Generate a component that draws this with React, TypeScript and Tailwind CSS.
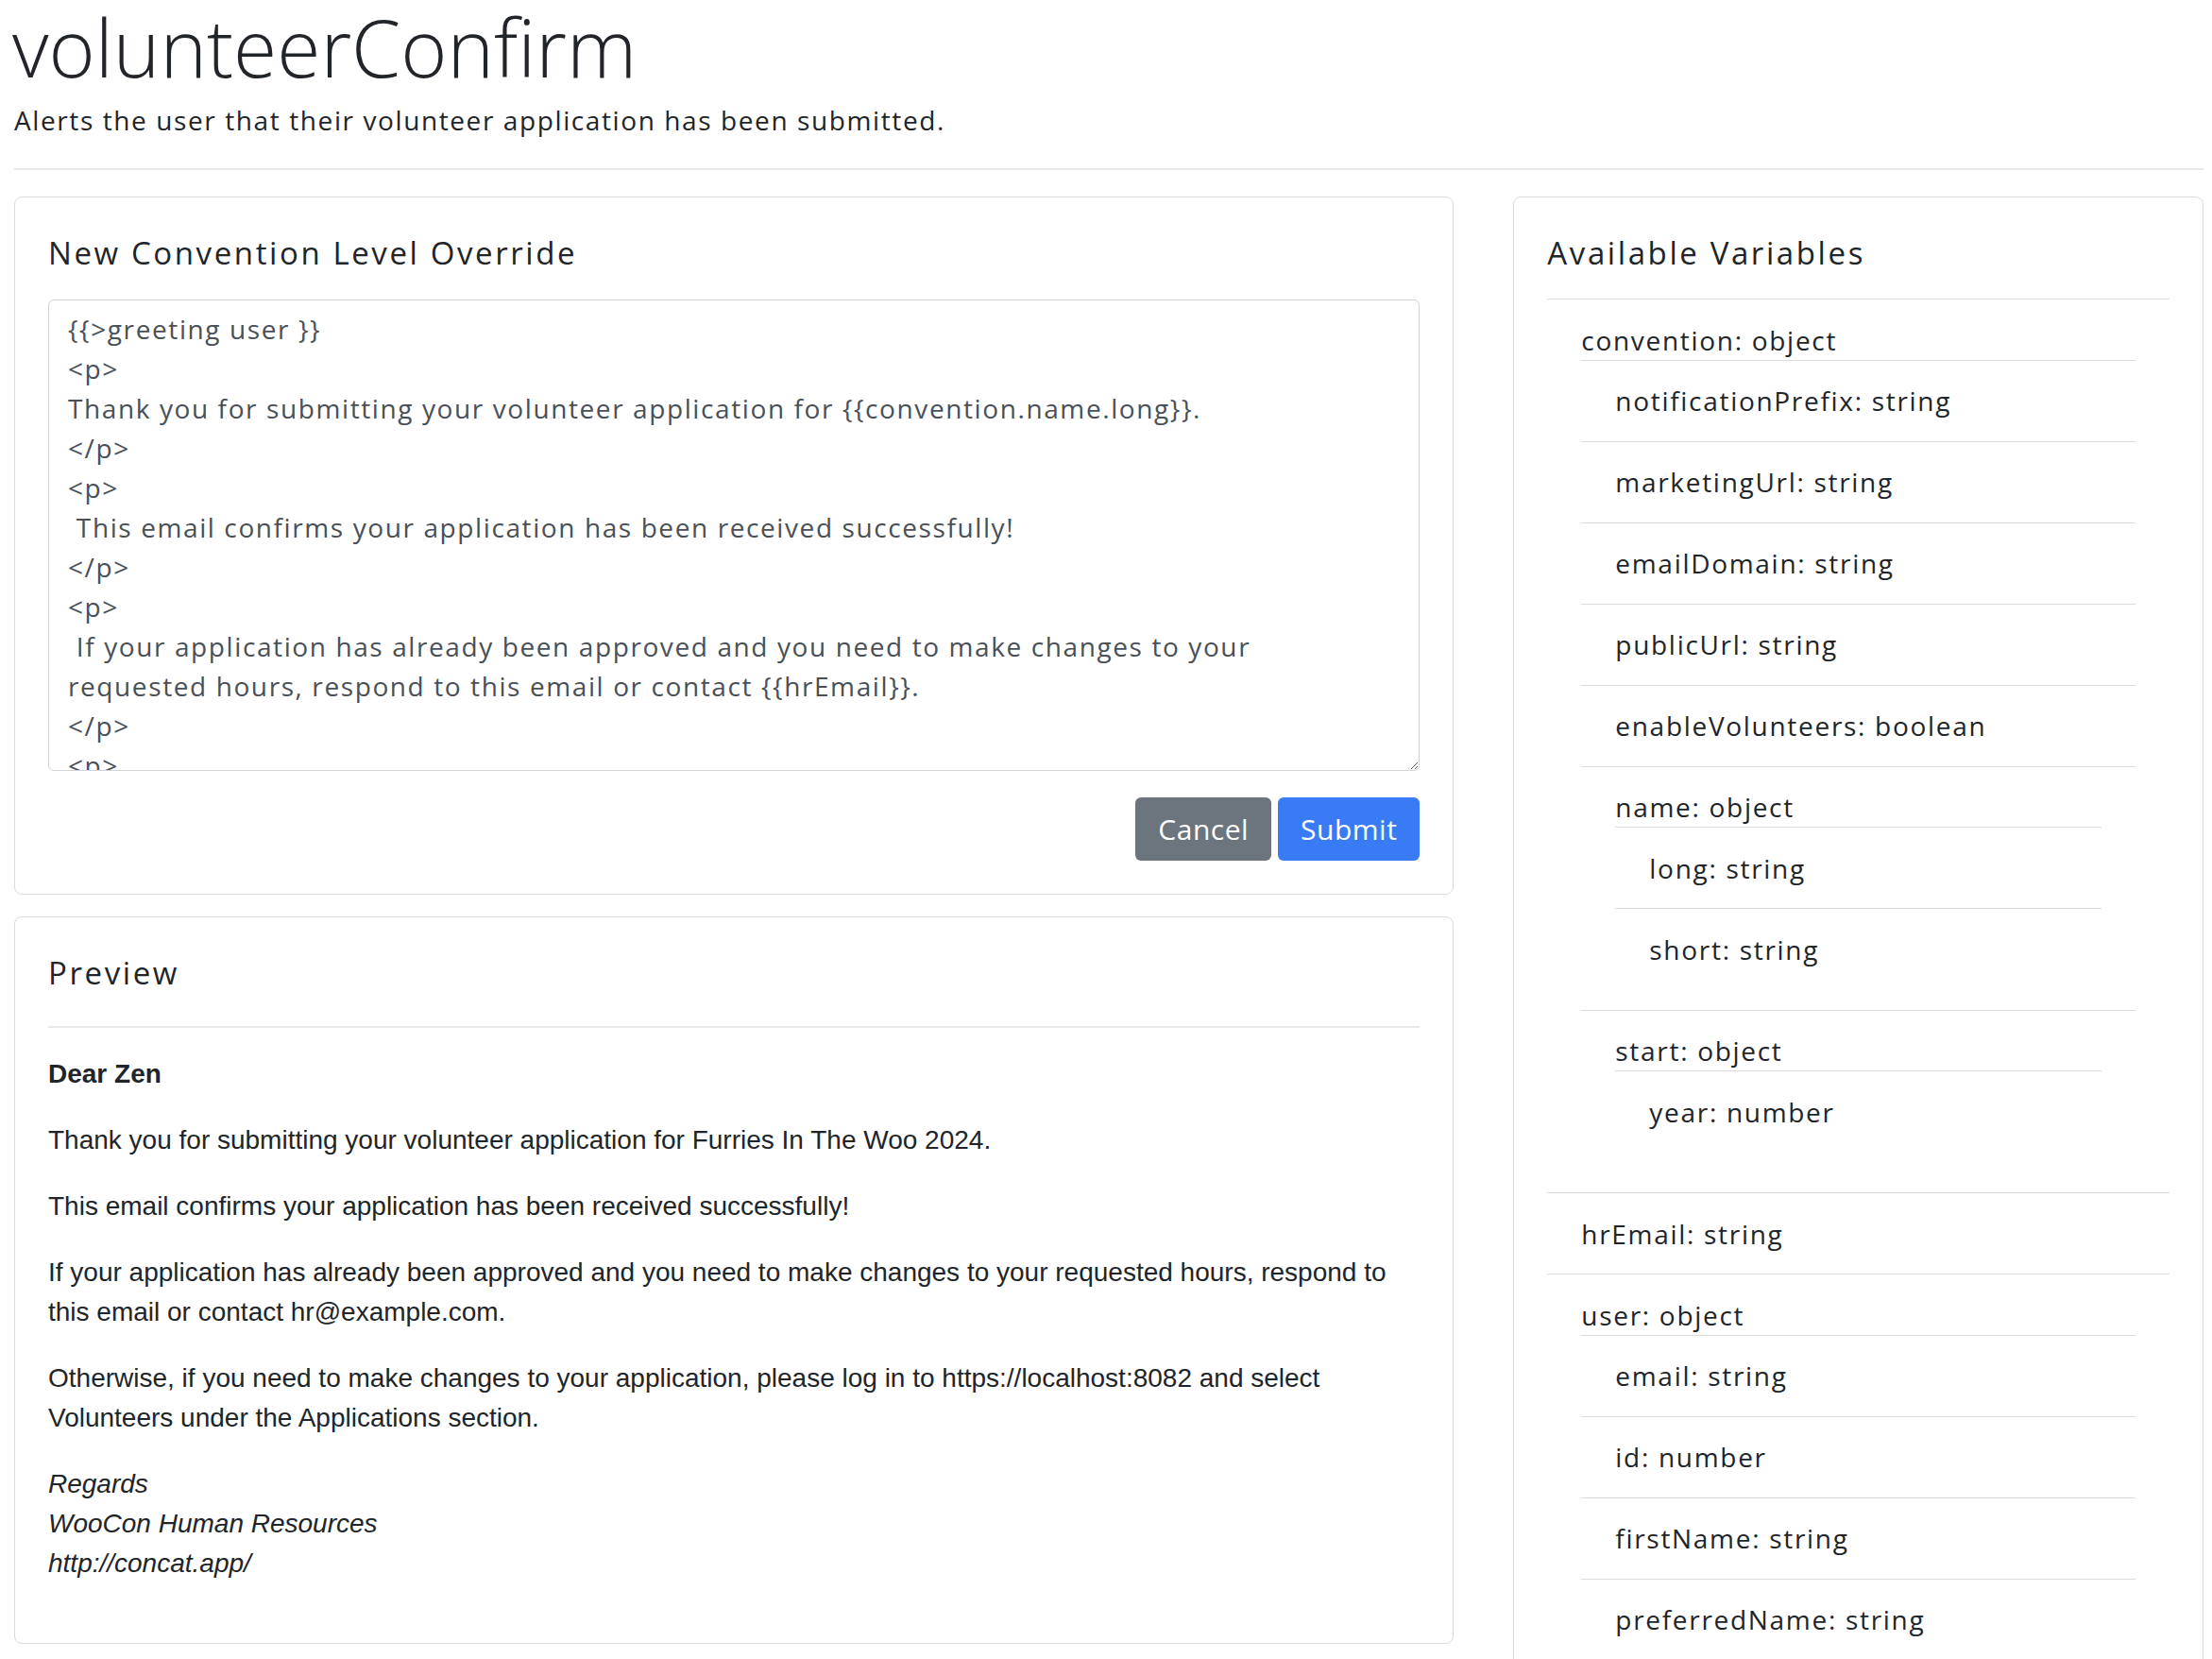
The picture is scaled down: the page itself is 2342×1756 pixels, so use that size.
import React from "react";

type Variable = {
  name: string;
  type: string;
  children?: Variable[];
};

const variables: Variable[] = [
  {
    name: "convention",
    type: "object",
    children: [
      { name: "notificationPrefix", type: "string" },
      { name: "marketingUrl", type: "string" },
      { name: "emailDomain", type: "string" },
      { name: "publicUrl", type: "string" },
      { name: "enableVolunteers", type: "boolean" },
      {
        name: "name",
        type: "object",
        children: [
          { name: "long", type: "string" },
          { name: "short", type: "string" },
        ],
      },
      {
        name: "start",
        type: "object",
        children: [{ name: "year", type: "number" }],
      },
    ],
  },
  { name: "hrEmail", type: "string" },
  {
    name: "user",
    type: "object",
    children: [
      { name: "email", type: "string" },
      { name: "id", type: "number" },
      { name: "firstName", type: "string" },
      { name: "preferredName", type: "string" },
    ],
  },
];

const template = `{{>greeting user }}
<p>
Thank you for submitting your volunteer application for {{convention.name.long}}.
</p>
<p>
 This email confirms your application has been received successfully!
</p>
<p>
 If your application has already been approved and you need to make changes to your
requested hours, respond to this email or contact {{hrEmail}}.
</p>
<p>
 Otherwise, if you need to make changes to your application, please log in to {{convention.publicUrl}} and select
Volunteers under the Applications section.
</p>
{{>signature }}`;

function VariableList(props: { items: Variable[] }) {
  return (
    <ul>
      {props.items.map((v, index) => {
        const last = index == props.items.length - 1;
        return (
          <li
            key={v.name}
            className={
              last
                ? "px-[36px] py-[21.5px]"
                : "px-[36px] py-[21.5px] border-b border-[#dcdcdc]"
            }
          >
            {v.children ? (
              <>
                <div className="leading-[42px] border-b border-[#dcdcdc]">
                  {v.name}: {v.type}
                </div>
                <VariableList items={v.children} />
              </>
            ) : (
              <div className="leading-[42px]">
                {v.name}: {v.type}
              </div>
            )}
          </li>
        );
      })}
    </ul>
  );
}

function Card(props: { children: React.ReactNode }) {
  return (
    <div className="bg-white border border-[#dcdcdc] rounded-[8px] p-[35px]">
      {props.children}
    </div>
  );
}

export default function App() {
  return (
    <div className="min-h-screen bg-white text-[#212529] font-['Open_Sans',sans-serif] pl-[15px] pr-[9px]">
      <h1 className="text-[84px] leading-[100px] font-light mb-[6px] -ml-[2px]">
        volunteerConfirm
      </h1>
      <p className="text-[28px] leading-[42px] tracking-[1.6px]">
        Alerts the user that their volunteer application has been submitted.
      </p>
      <hr className="mt-[30px] mb-[28px] border-0 h-[2px] bg-[#e8e8e8]" />

      <div className="grid grid-cols-3 gap-[63px] items-start">
        <div className="col-span-2 flex flex-col gap-[23px]">
          <Card>
            <h5 className="text-[33px] leading-[48px] tracking-[2.6px] mb-[25px]">
              New Convention Level Override
            </h5>
            <textarea
              className="block w-full h-[499px] border border-[#cfd4d9] rounded-[6px] px-[20px] py-[9px] text-[28px] leading-[42px] tracking-[1.6px] text-[#495057] whitespace-pre overflow-hidden resize-y outline-none"
              wrap="off"
              defaultValue={template}
            />
            <div className="flex justify-end gap-[7px] mt-[28px]">
              <button className="h-[67px] px-[24px] rounded-[6px] bg-[#6c757d] text-white text-[30px] tracking-[0.5px]">
                Cancel
              </button>
              <button className="h-[67px] px-[24px] rounded-[6px] bg-[#397bf5] text-white text-[30px] tracking-[0.5px]">
                Submit
              </button>
            </div>
          </Card>

          <Card>
            <h5 className="text-[33px] leading-[48px] tracking-[2.6px] mb-[32px]">
              Preview
            </h5>
            <hr className="border-0 h-[2px] bg-[#e8e8e8] mb-[28px]" />
            <div className="font-['Liberation_Sans',Arial,sans-serif] text-[28px] leading-[42px] text-[#212529]">
              <p className="mb-[28px] font-bold">Dear Zen</p>
              <p className="mb-[28px]">
                Thank you for submitting your volunteer application for Furries
                In The Woo 2024.
              </p>
              <p className="mb-[28px]">
                This email confirms your application has been received
                successfully!
              </p>
              <p className="mb-[28px]">
                If your application has already been approved and you need to
                make changes to your requested hours, respond to this email or
                contact hr@example.com.
              </p>
              <p className="mb-[28px]">
                Otherwise, if you need to make changes to your application,
                please log in to https://localhost:8082 and select Volunteers
                under the Applications section.
              </p>
              <p className="mb-[28px] italic">
                Regards
                <br />
                WooCon Human Resources
                <br />
                http://concat.app/
              </p>
            </div>
          </Card>
        </div>

        <Card>
          <h5 className="text-[33px] leading-[48px] tracking-[2.6px] pb-[24px] border-b border-[#dcdcdc]">
            Available Variables
          </h5>
          <div className="text-[28px] tracking-[1.7px]">
            <VariableList items={variables} />
          </div>
        </Card>
      </div>
    </div>
  );
}
